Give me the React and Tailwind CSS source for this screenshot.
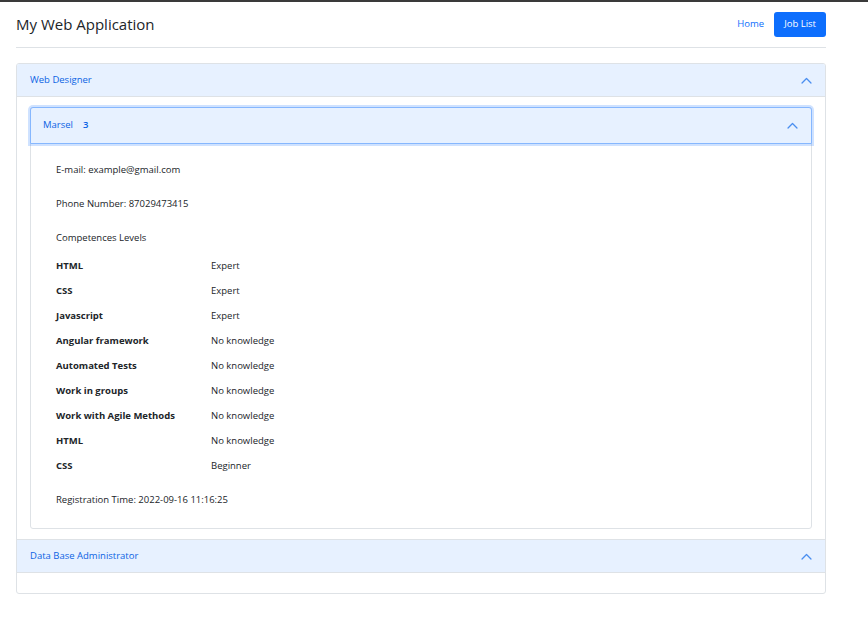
import React from "react";

const Chevron = ({ className = "" }) => (
  <svg viewBox="0 0 16 16" className={className} fill="none" stroke="currentColor" strokeWidth="1.6">
    <path d="M2.5 11 8 5.5 13.5 11" strokeLinecap="round" strokeLinejoin="round" />
  </svg>
);

const skills = [
  ["HTML", "Expert"],
  ["CSS", "Expert"],
  ["Javascript", "Expert"],
  ["Angular framework", "No knowledge"],
  ["Automated Tests", "No knowledge"],
  ["Work in groups", "No knowledge"],
  ["Work with Agile Methods", "No knowledge"],
  ["HTML", "No knowledge"],
  ["CSS", "Beginner"],
];

export default function App() {
  return (
    <div
      className="min-h-[619px] w-[868px] bg-white border-t-2 border-[#3a3a3a] text-[#212529]"
      style={{ fontFamily: "'Open Sans', 'Noto Sans', sans-serif" }}
    >
      <div className="w-[810px] ml-4">
        <header className="flex items-center justify-between h-[46px] border-b border-[#dee2e6]">
          <h1 className="text-[15px] text-[#212529]">My Web Application</h1>
          <nav className="flex items-center gap-[10px]">
            <a className="text-[9.5px] text-[#0d6efd]">Home</a>
            <button className="h-[25px] px-[10px] rounded-[3px] bg-[#0d6efd] text-white text-[9.5px] font-medium">
              Job List
            </button>
          </nav>
        </header>

        <div className="mt-[15px] border border-[#dee2e6] rounded-[3px] overflow-hidden">
          <div className="flex items-center justify-between h-[33px] pl-[13px] pr-[12px] bg-[#e7f1ff] border-b border-[#dee2e6] text-[#0c63e4] text-[9.5px]">
            <span>Web Designer</span>
            <Chevron className="w-[13px] h-[13px] text-[#4a8ef0]" />
          </div>
          <div className="px-[13px] pt-[10px] pb-[10px]">
            <div className="border border-[#dee2e6] rounded-[3px]">
              <div className="flex items-center justify-between h-[37px] pl-[12px] pr-[12px] bg-[#e7f1ff] border border-[#86b7fe] rounded-t-[3px] shadow-[0_0_0_2px_rgba(13,110,253,0.2)] -m-px text-[9.5px] text-[#0c63e4]">
                <span className="flex gap-[10px]">
                  <span>Marsel</span>
                  <span className="font-semibold">3</span>
                </span>
                <Chevron className="w-[13px] h-[13px] text-[#4a8ef0]" />
              </div>
              <div className="pl-[25px] pt-[20px] pb-[21px] text-[9.5px] text-[#212529]">
                <p className="h-[14px] leading-[14px]">E-mail: example@gmail.com</p>
                <p className="mt-[20px] h-[14px] leading-[14px]">Phone Number: 87029473415</p>
                <p className="mt-[20px] h-[14px] leading-[14px]">Competences Levels</p>
                <div className="mt-[14px] flex flex-col gap-[11px]">
                  {skills.map(([name, level], i) => (
                    <div key={i} className="flex h-[14px] leading-[14px]">
                      <span className="w-[155px] font-bold">{name}</span>
                      <span>{level}</span>
                    </div>
                  ))}
                </div>
                <p className="mt-[20px] h-[14px] leading-[14px]">Registration Time: 2022-09-16 11:16:25</p>
              </div>
            </div>
          </div>
          <div className="flex items-center justify-between h-[34px] pl-[13px] pr-[12px] bg-[#e7f1ff] border-t border-b border-[#dee2e6] text-[#0c63e4] text-[9.5px]">
            <span>Data Base Administrator</span>
            <Chevron className="w-[13px] h-[13px] text-[#4a8ef0]" />
          </div>
          <div className="h-[20px]" />
        </div>
      </div>
    </div>
  );
}
